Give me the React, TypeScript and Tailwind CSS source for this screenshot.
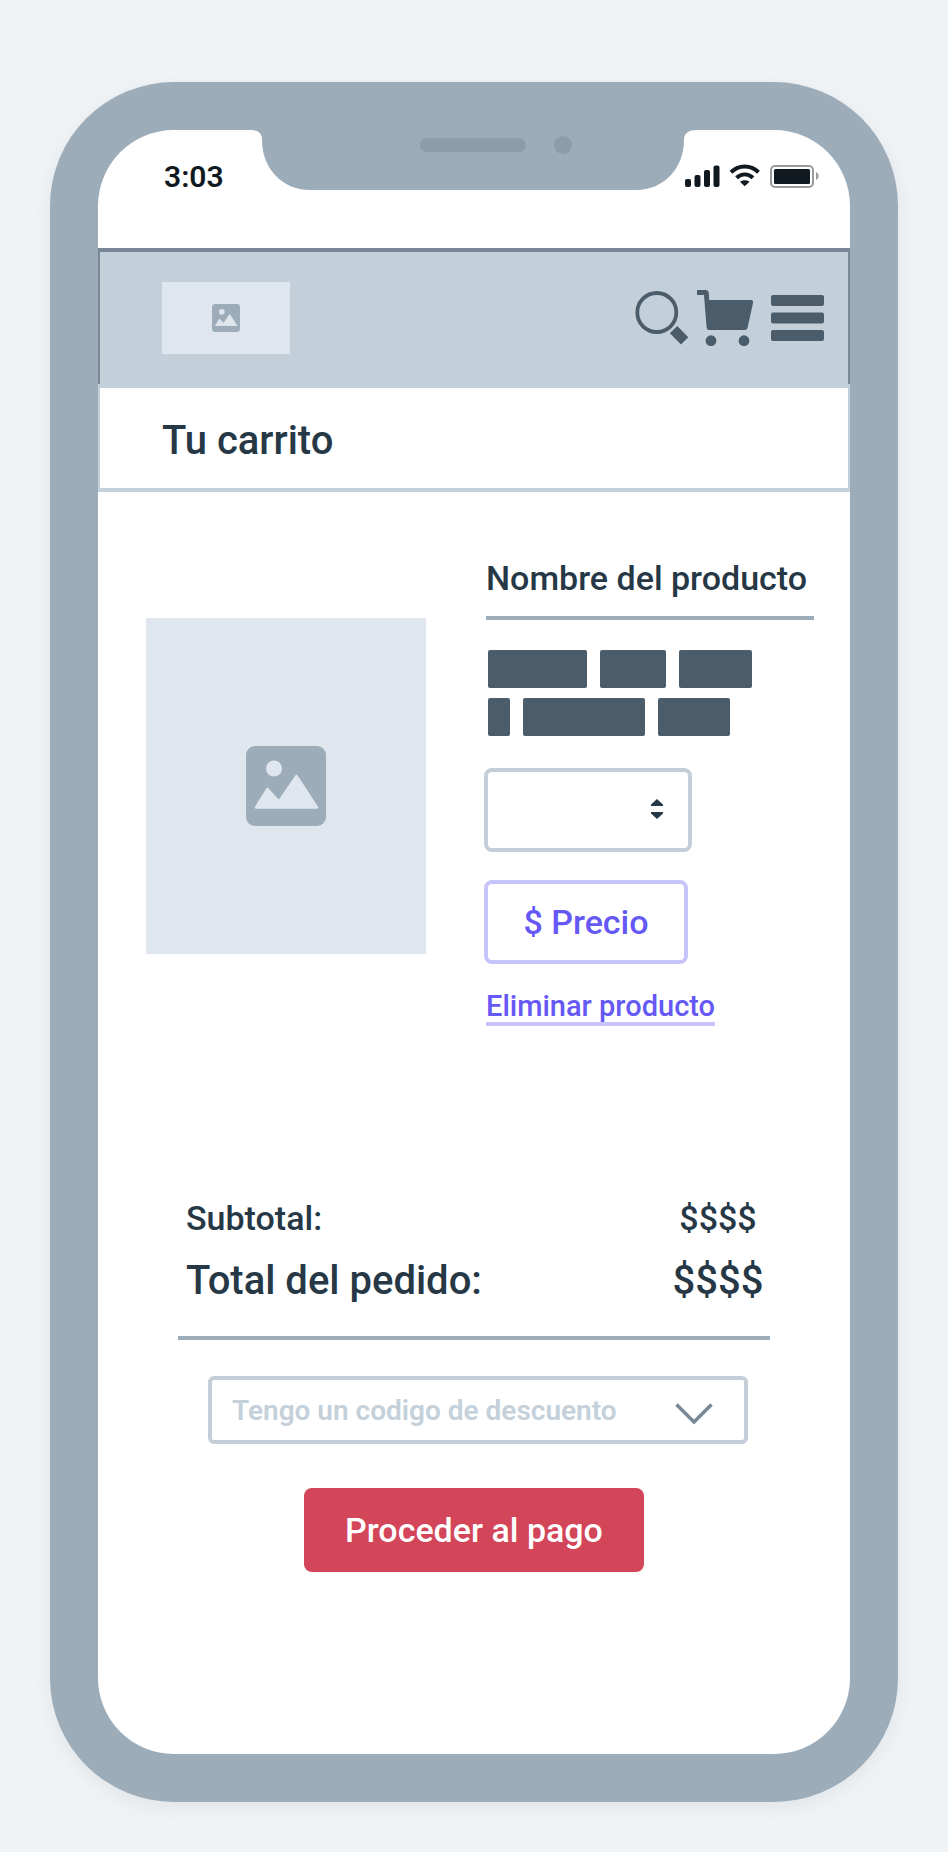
import React from "react";

function PictureIcon({ className }: { className: string }) {
  return (
    <svg viewBox="0 0 80 80" className={className} aria-hidden="true">
      <rect width="80" height="80" rx="9" fill="#9dacb9" />
      <circle cx="28" cy="22.500" r="8" fill="#dfe6ee" />
      <path
        d="M10 61.500 21.500 43 33 55.500 50.500 30 71 61.500Z"
        fill="#dfe6ee"
        stroke="#dfe6ee"
        strokeWidth="2.500"
        strokeLinejoin="round"
      />
    </svg>
  );
}

function Notch() {
  return (
    <svg
      viewBox="0 0 446 60"
      className="absolute top-0 left-1/2 h-[60px] w-[446px] -translate-x-1/2"
      aria-hidden="true"
    >
      <path
        d="M0 0C7 0 11 3 11 10C11 38 31 60 59 60H385C413 60 433 38 433 10C433 3 438 0 446 0Z"
        fill="#9dacb9"
      />
      <rect x="169" y="8" width="106" height="14" rx="7" fill="#8d9cab" />
      <circle cx="312" cy="15" r="9" fill="#8d9cab" />
    </svg>
  );
}

function StatusBar() {
  return (
    <div className="relative flex h-[118px] items-start justify-between pt-[29px] pr-[31px] pl-[66px]">
      <Notch />
      <span className="text-[30px] leading-[36px] font-semibold text-[#101820]">3:03</span>
      <svg viewBox="0 0 134 36" className="h-[36px] w-[134px]" fill="#101820" aria-hidden="true">
        <rect x="0" y="20" width="6" height="8" rx="2" />
        <rect x="9.500" y="16" width="6" height="12" rx="2" />
        <rect x="19" y="11" width="6" height="17" rx="2" />
        <rect x="28.500" y="6.500" width="6" height="21.500" rx="2" />
        <path
          d="M46 13.200C54 5.500 65.500 5.500 73.500 13.200"
          fill="none"
          stroke="#101820"
          strokeWidth="4"
        />
        <path
          d="M51.500 18.700C56.500 14.300 63 14.300 68 18.700"
          fill="none"
          stroke="#101820"
          strokeWidth="4"
        />
        <path d="M55 22.700C58 20.800 61.500 20.800 64.500 22.700L59.700 27.300Z" />
        <rect
          x="86"
          y="7"
          width="42"
          height="21"
          rx="4"
          fill="none"
          stroke="#9b9b9b"
          strokeWidth="2"
        />
        <rect x="89" y="10" width="36" height="15" rx="1.500" />
        <path d="M131 13C134.500 15 134.500 19 131 21Z" fill="#9b9b9b" />
      </svg>
    </div>
  );
}

function Header() {
  return (
    <header className="flex h-[136px] items-start justify-between border-x-2 border-t-4 border-[#788896] bg-[#c4d0d9] pt-[30px] pr-6 pl-[62px]">
      <a
        href="#inicio"
        aria-label="Inicio"
        className="flex h-[72px] w-[128px] items-center justify-center bg-[#dfe6ee]"
      >
        <PictureIcon className="size-7" />
      </a>
      <div className="flex items-center gap-2 pt-2">
        <button type="button" aria-label="Buscar">
          <svg viewBox="0 0 54 56" className="h-[56px] w-[54px]" aria-hidden="true">
            <circle cx="21.800" cy="22.500" r="19.500" fill="none" stroke="#4b5c6a" strokeWidth="3.800" />
            <path d="M42.300 36 53.300 47.300 46 54.500 34.800 43.200Z" fill="#4b5c6a" />
          </svg>
        </button>
        <button type="button" aria-label="Carrito">
          <svg viewBox="0 0 58 56" className="h-[56px] w-[58px]" fill="#4b5c6a" aria-hidden="true">
            <path d="M0 0H9Q11.500 0 11.700 2.500L12.200 10H54Q56.500 10.200 56 13L50.500 38Q50 40 48 40H12Q9.800 40 9.600 37.500L7 5H0Z" />
            <circle cx="14" cy="50.700" r="5.400" />
            <circle cx="47" cy="50.700" r="5.400" />
          </svg>
        </button>
        <button type="button" aria-label="Menú" className="pl-2">
          <svg viewBox="0 0 53 56" className="h-[56px] w-[53px]" fill="#4b5c6a" aria-hidden="true">
            <rect x="0" y="5" width="53" height="11" rx="2" />
            <rect x="0" y="22.500" width="53" height="11" rx="2" />
            <rect x="0" y="40" width="53" height="11" rx="2" />
          </svg>
        </button>
      </div>
    </header>
  );
}

const descriptionRows = [
  ["w-[99px]", "w-[66px]", "w-[73px]"],
  ["w-[22px]", "w-[122px]", "w-[72px]"],
];

function Product() {
  return (
    <section className="flex items-start gap-[58px] pt-16 pr-[36px] pl-[48px]">
      <div className="mt-[62px] flex h-[336px] w-[280px] shrink-0 items-center justify-center bg-[#dfe6ee]">
        <PictureIcon className="size-20" />
      </div>
      <div className="flex min-w-0 flex-1 flex-col items-start">
        <h2 className="ml-0.5 self-stretch border-b-4 border-[#9dacb9] pb-4 text-[34px] leading-[44px] font-medium whitespace-nowrap text-[#263846]">
          Nombre del producto
        </h2>
        <div className="mt-[30px] ml-1 flex flex-col gap-2.5">
          {descriptionRows.map((row, i) => (
            <div key={i} className="flex gap-[13px]">
              {row.map((width) => (
                <span key={width} className={"h-[38px] rounded-xs bg-[#4b5c6a] " + width} />
              ))}
            </div>
          ))}
        </div>
        <div className="relative mt-8 w-[208px]">
          <select
            aria-label="Cantidad"
            className="block h-[84px] w-full appearance-none rounded-lg border-4 border-[#c4ced8] bg-white px-4 text-[28px] text-[#263846]"
          >
            <option value=""></option>
          </select>
          <svg
            viewBox="0 0 12 20"
            className="pointer-events-none absolute top-[31px] right-[29px] h-[20px] w-[12px]"
            fill="#263846"
            aria-hidden="true"
          >
            <path d="M6 0 12 5.500V7H0V5.500Z" />
            <path d="M0 13H12V14.500L6 20 0 14.500Z" />
          </svg>
        </div>
        <button
          type="button"
          className="mt-7 h-[84px] w-[204px] rounded-lg border-4 border-[#c7c4fc] text-[34px] leading-[44px] font-medium text-[#6558f5]"
        >
          $ Precio
        </button>
        <a
          href="#eliminar"
          className="mt-[26px] ml-0.5 border-b-4 border-[#c7c4fc] text-[29px] leading-[32px] font-medium text-[#6558f5]"
        >
          Eliminar producto
        </a>
      </div>
    </section>
  );
}

function Summary() {
  return (
    <dl className="mx-20 mt-[163px] border-b-4 border-[#9dacb9] pb-[21px] pl-2 font-medium text-[#263846]">
      <div className="flex justify-between text-[34px] leading-[58px]">
        <dt>Subtotal:</dt>
        <dd className="w-[104px] text-center">$$$$</dd>
      </div>
      <div className="flex justify-between text-[40px] leading-[68px]">
        <dt>Total del pedido:</dt>
        <dd className="w-[104px] text-center">$$$$</dd>
      </div>
    </dl>
  );
}

function Checkout() {
  return (
    <form className="flex flex-col items-center pb-[182px]" onSubmit={(e) => e.preventDefault()}>
      <div className="relative mt-9 self-stretch pr-[102px] pl-[110px]">
        <select
          aria-label="Código de descuento"
          className="block h-[68px] w-full appearance-none rounded-md border-4 border-[#c4ced8] bg-white pt-0.5 pr-20 pl-5 text-[28px] font-semibold text-[#c4d0da]"
        >
          <option>Tengo un codigo de descuento</option>
        </select>
        <svg
          viewBox="0 0 38 22"
          className="pointer-events-none absolute top-[27px] right-[137px] h-[22px] w-[38px]"
          fill="none"
          stroke="#788896"
          strokeWidth="3.500"
          aria-hidden="true"
        >
          <path d="M1.500 1.500 19 19 36.500 1.500" />
        </svg>
      </div>
      <button
        type="submit"
        className="mt-11 h-[84px] w-[340px] rounded-lg bg-[#d34559] text-[34px] leading-[44px] font-medium text-white"
      >
        Proceder al pago
      </button>
    </form>
  );
}

export default function App() {
  return (
    <div className="min-h-screen bg-[#eff3f6] px-[50px] pt-[82px] pb-[50px] font-['Roboto','Liberation_Sans',sans-serif]">
      <div className="rounded-[124px] bg-[#9dacb9] p-12 shadow-[0_6px_20px_rgba(0,0,0,0.06)]">
        <main className="overflow-hidden rounded-[76px] bg-white">
          <StatusBar />
          <Header />
          <div className="border-x-2 border-y-4 border-[#c4d0d9] pt-7 pb-[22px] pl-[62px]">
            <h1 className="text-[40px] leading-[50px] font-medium text-[#263846]">Tu carrito</h1>
          </div>
          <Product />
          <Summary />
          <Checkout />
        </main>
      </div>
    </div>
  );
}
